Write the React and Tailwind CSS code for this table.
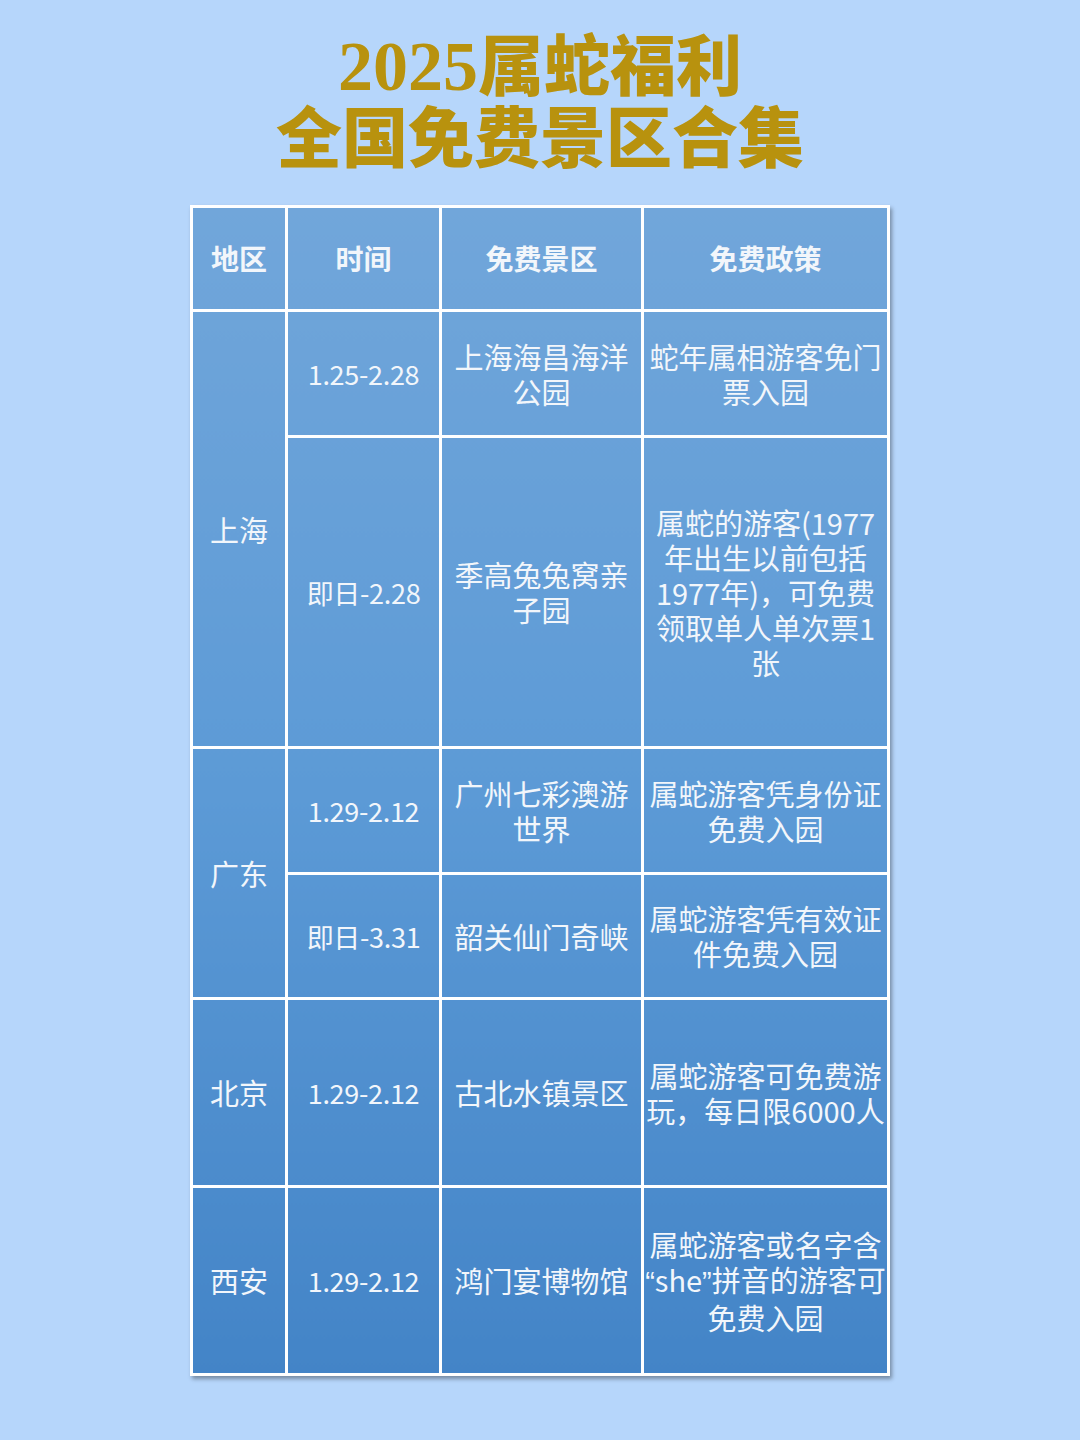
const Q = ({ children }) => (
  <span className="font-['Liberation_Sans',sans-serif]">{children}</span>
)

const rows = [
  {
    region: '上海',
    span: 2,
    time: '1.25-2.28',
    spot: ['上海海昌海洋', '公园'],
    policy: ['蛇年属相游客免门', '票入园'],
    h: 'h-[126px]',
  },
  {
    time: '即日-2.28',
    spot: ['季高兔兔窝亲', '子园'],
    policy: ['属蛇的游客(1977', '年出生以前包括', '1977年)，可免费', '领取单人单次票1', '张'],
    h: 'h-[311px]',
  },
  {
    region: '广东',
    span: 2,
    time: '1.29-2.12',
    spot: ['广州七彩澳游', '世界'],
    policy: ['属蛇游客凭身份证', '免费入园'],
    h: 'h-[126px]',
  },
  {
    time: '即日-3.31',
    spot: ['韶关仙门奇峡'],
    policy: ['属蛇游客凭有效证', '件免费入园'],
    h: 'h-[125px]',
  },
  {
    region: '北京',
    span: 1,
    time: '1.29-2.12',
    spot: ['古北水镇景区'],
    policy: ['属蛇游客可免费游', '玩，每日限6000人'],
    h: 'h-[188px]',
  },
  {
    region: '西安',
    span: 1,
    time: '1.29-2.12',
    spot: ['鸿门宴博物馆'],
    policy: [
      '属蛇游客或名字含',
      <><Q>“</Q>she<Q>”</Q>拼音的游客可</>,
      '免费入园',
    ],
    h: 'h-[188px]',
  },
]

function Lines({ items }) {
  return items.map((t, i) => (
    <div key={i} className="whitespace-nowrap">{t}</div>
  ))
}

export default function App() {
  const cell = 'border-[3px] border-white text-center align-middle p-0'
  return (
    <div className="min-h-[1440px] bg-[#b6d6fb] pt-[31px] font-['Noto_Sans_CJK_SC',sans-serif]">
      <h1 className="text-center text-[66px] leading-[72px] font-black text-[#b8920e] font-['Liberation_Serif','Noto_Sans_CJK_SC',serif]">
        <div className="text-[70px]">2025<span className="text-[66px]">属蛇福利</span></div>
        <div>全国免费景区合集</div>
      </h1>

      <table className="mx-auto mt-[29px] w-[697px] border-collapse table-fixed bg-gradient-to-b from-[#71a6da] via-[#5c9ad6] to-[#4384c7] shadow-[2px_3px_4px_rgba(0,0,0,0.35)] text-[#f2f6fb] text-[29px] leading-[35px]">
        <colgroup>
          <col className="w-[95px]" />
          <col className="w-[154px]" />
          <col className="w-[202px]" />
          <col className="w-[246px]" />
        </colgroup>
        <thead>
          <tr className="h-[104px] font-bold text-[28px]">
            <th className={cell}>地区</th>
            <th className={cell}>时间</th>
            <th className={cell}>免费景区</th>
            <th className={cell}>免费政策</th>
          </tr>
        </thead>
        <tbody>
          {rows.map((r, i) => (
            <tr key={i} className={r.h}>
              {r.region && (
                <td rowSpan={r.span} className={cell}>{r.region}</td>
              )}
              <td className={cell + ' text-[27px] tracking-[-0.3px]'}>{r.time}</td>
              <td className={cell}><Lines items={r.spot} /></td>
              <td className={cell}><Lines items={r.policy} /></td>
            </tr>
          ))}
        </tbody>
      </table>
    </div>
  )
}
